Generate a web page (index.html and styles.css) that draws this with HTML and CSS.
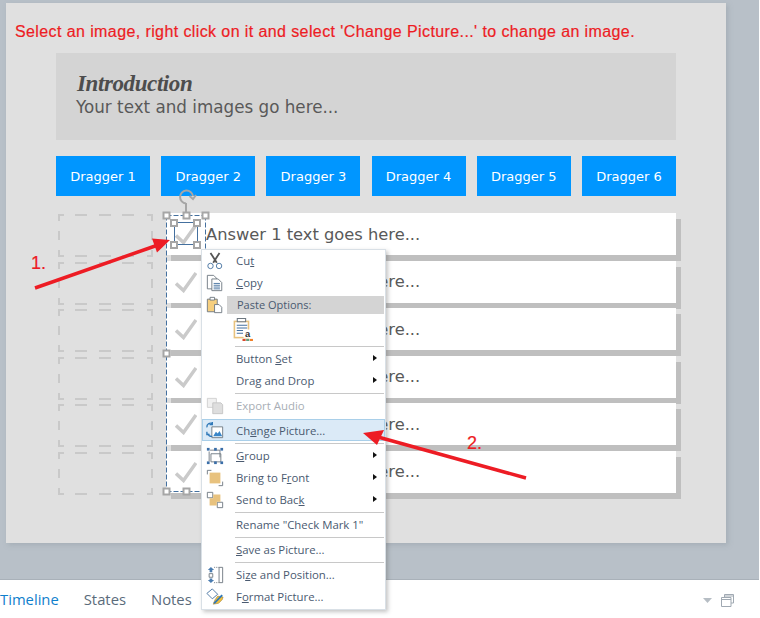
FILE: index.html
```html
<!DOCTYPE html>
<html lang="en">
<head>
<meta charset="utf-8">
<title>Change Picture</title>
<link rel="stylesheet" href="styles.css">
</head>
<body>
<div class="page">
  <main class="stage">
    <section class="slide">
      <p class="note">Select an image, right click on it and select 'Change Picture...' to change an image.</p>
      <header class="intro">
        <h1>Introduction</h1>
        <p>Your text and images go here...</p>
      </header>
      <div class="draggers">
        <div class="dragger">Dragger 1</div>
        <div class="dragger">Dragger 2</div>
        <div class="dragger">Dragger 3</div>
        <div class="dragger">Dragger 4</div>
        <div class="dragger">Dragger 5</div>
        <div class="dragger">Dragger 6</div>
      </div>
      <div class="board">
        <div class="zones">
          <svg class="zone" viewBox="0 0 95 43"><path d="M1 7V1H6M17 1H29M41 1H53M64 1H76M89 1H94V7M94 17V26M94 36V42H89M76 42H64M53 42H41M29 42H17M6 42H1V36M1 26V17"/></svg>
          <svg class="zone" viewBox="0 0 95 43"><path d="M1 7V1H6M17 1H29M41 1H53M64 1H76M89 1H94V7M94 17V26M94 36V42H89M76 42H64M53 42H41M29 42H17M6 42H1V36M1 26V17"/></svg>
          <svg class="zone" viewBox="0 0 95 43"><path d="M1 7V1H6M17 1H29M41 1H53M64 1H76M89 1H94V7M94 17V26M94 36V42H89M76 42H64M53 42H41M29 42H17M6 42H1V36M1 26V17"/></svg>
          <svg class="zone" viewBox="0 0 95 43"><path d="M1 7V1H6M17 1H29M41 1H53M64 1H76M89 1H94V7M94 17V26M94 36V42H89M76 42H64M53 42H41M29 42H17M6 42H1V36M1 26V17"/></svg>
          <svg class="zone" viewBox="0 0 95 43"><path d="M1 7V1H6M17 1H29M41 1H53M64 1H76M89 1H94V7M94 17V26M94 36V42H89M76 42H64M53 42H41M29 42H17M6 42H1V36M1 26V17"/></svg>
          <svg class="zone" viewBox="0 0 95 43"><path d="M1 7V1H6M17 1H29M41 1H53M64 1H76M89 1H94V7M94 17V26M94 36V42H89M76 42H64M53 42H41M29 42H17M6 42H1V36M1 26V17"/></svg>
        </div>
        <div class="answers">
          <div class="answer"><svg class="check" viewBox="0 0 22 22"><path d="M1 12.500l7.500 7L21 2"/></svg><span>Answer 1 text goes here...</span></div>
          <div class="answer"><svg class="check" viewBox="0 0 22 22"><path d="M1 12.500l7.500 7L21 2"/></svg><span>Answer 2 text goes here...</span></div>
          <div class="answer"><svg class="check" viewBox="0 0 22 22"><path d="M1 12.500l7.500 7L21 2"/></svg><span>Answer 3 text goes here...</span></div>
          <div class="answer"><svg class="check" viewBox="0 0 22 22"><path d="M1 12.500l7.500 7L21 2"/></svg><span>Answer 4 text goes here...</span></div>
          <div class="answer"><svg class="check" viewBox="0 0 22 22"><path d="M1 12.500l7.500 7L21 2"/></svg><span>Answer 5 text goes here...</span></div>
          <div class="answer"><svg class="check" viewBox="0 0 22 22"><path d="M1 12.500l7.500 7L21 2"/></svg><span>Answer 6 text goes here...</span></div>
        </div>
      </div>
    </section>
  </main>

  <footer class="timeline">
    <nav class="tabs">
      <span class="tab tab-active">Timeline</span>
      <span class="tab">States</span>
      <span class="tab">Notes</span>
    </nav>
    <div class="tools">
      <svg class="tool-caret" viewBox="0 0 9 5"><path d="M0 0h9L4.500 5z"/></svg>
      <svg class="tool-win" viewBox="0 0 13 13"><path d="M3.500 3V.5h9V9H10"/><path d="M.5 3.500h9.500v9H.5z"/><path d="M.5 5.500h9.500M3.500 2h9"/></svg>
    </div>
  </footer>

  <!-- selection overlay -->
  <svg class="selection" viewBox="0 0 760 618">
    <path class="sel-group" d="M166.500 215.500H205.500M166.500 215.500V491.500M166.500 491.500H205.500M205.500 215.500V250"/>
    <rect class="sel-box" x="174.500" y="222.500" width="23" height="22"/>
    <path class="sel-stem" d="M186 213V203"/>
    <path class="sel-rot" d="M193 196A6.500 6.500 0 1 0 186 203.500"/>
    <path class="sel-rot" d="M189.500 196l3.500 3 3-4"/>
    <g class="handles">
      <rect x="163.500" y="212.500" width="6" height="6"/><rect x="183.500" y="212.500" width="6" height="6"/><rect x="202.500" y="212.500" width="6" height="6"/>
      <rect x="171" y="220" width="6" height="6"/><rect x="194" y="220" width="6" height="6"/>
      <rect x="171" y="242" width="6" height="6"/><rect x="194" y="242" width="6" height="6"/>
      <rect x="163.500" y="350.500" width="6" height="6"/>
      <rect x="163.500" y="488.500" width="6" height="6"/><rect x="183.500" y="488.500" width="6" height="6"/>
    </g>
  </svg>

  <!-- context menu -->
  <div class="menu">
    <div class="item"><svg class="ico" viewBox="0 0 20 20"><path class="i-dark" d="M5 1l7 11M15 1L8 12"/><circle class="i-blue" cx="5" cy="15.500" r="3"/><circle class="i-blue" cx="14.500" cy="15.500" r="3"/></svg><span>Cu<u>t</u></span></div>
    <div class="item"><svg class="ico" viewBox="0 0 20 20"><path class="i-line" d="M1.500 1.500h7l3 3v12h-10z"/><path class="i-fill" d="M6.500 5.500h7l4 4v9h-11z"/><path class="i-blue" d="M8.500 10.500h7M8.500 12.500h7M8.500 14.500h7M8.500 16.500h7"/></svg><span><u>C</u>opy</span></div>
    <div class="item item-head"><svg class="ico" viewBox="0 0 20 20"><path class="i-gold" d="M1.500 3.500h11v14h-11z"/><path class="i-line" d="M4.500 1.500h5v3h-5z"/><path class="i-fill" d="M9.500 9.500h5l3 3v6h-8z"/></svg><span class="head">Paste Options:</span></div>
    <div class="paste"><svg class="paste-ico" viewBox="0 0 20 22"><path class="i-tan" d="M1.500 2.500h15v17h-15z"/><path class="i-paper" d="M3 4h12v14H3z"/><path class="i-line" d="M5 .5h8v3H5z"/><path class="i-blue" d="M4.500 7h10M4.500 9.500h10M4.500 12h6M4.500 14.500h6"/><rect class="i-white" x="11" y="11" width="9" height="8"/><text class="i-a" x="12.500" y="18">a</text><rect class="i-red" x="10" y="20" width="3" height="2"/><rect class="i-green" x="13.500" y="20" width="3" height="2"/><rect class="i-orange" x="17" y="20" width="3" height="2"/></svg></div>
    <hr class="sep">
    <div class="item"><span>Button <u>S</u>et</span><i class="more"></i></div>
    <div class="item"><span>Drag and Drop</span><i class="more"></i></div>
    <hr class="sep">
    <div class="item item-off"><svg class="ico" viewBox="0 0 20 20"><path class="i-pale" d="M1.500 1.500h10v10h-10z"/><path class="i-pale2" d="M7.500 6.500h9l2 2v10h-11z"/></svg><span>Export Audio</span></div>
    <div class="item item-on"><svg class="ico" viewBox="0 0 20 20"><path class="i-line" d="M6.500 6.500h12v12h-12z"/><path class="i-blue2" d="M1 7a4 4 0 0 1 6-4M7 1v3H4M7 17a4 4 0 0 1-5-3M1 12v3h3"/><path class="i-sky" d="M8 17l3-5 2 2 2-3 3 6z"/></svg><span>Ch<u>a</u>nge Picture...</span></div>
    <hr class="sep sep-tight">
    <div class="item"><svg class="ico" viewBox="0 0 20 20"><path class="i-open" d="M4.500 3.500h11v8M3.500 5v11M5.500 7.500h11v9h-11z"/><g class="i-solid"><rect x="1" y="1" width="3" height="3"/><rect x="9" y="1" width="3" height="3"/><rect x="16" y="1" width="3" height="3"/><rect x="1" y="16" width="3" height="3"/><rect x="9" y="16" width="3" height="3"/><rect x="16" y="16" width="3" height="3"/></g></svg><span><u>G</u>roup</span><i class="more"></i></div>
    <div class="item"><svg class="ico" viewBox="0 0 20 20"><path class="i-open" d="M1.500 6V1.500H6M14 18.500h4.500V14"/><rect class="i-tan" x="4" y="4" width="12" height="12"/></svg><span>Bring to F<u>r</u>ont</span><i class="more"></i></div>
    <div class="item"><svg class="ico" viewBox="0 0 20 20"><path class="i-white2" d="M1.500 1.500h6v6h-6zM12.500 12.500h6v6h-6z"/><path class="i-tan" d="M4 8h4V4h8v8h-4v4H4z"/></svg><span>Send to Bac<u>k</u></span><i class="more"></i></div>
    <hr class="sep">
    <div class="item"><span>Rename "Check Mark 1"</span></div>
    <hr class="sep">
    <div class="item"><span><u>S</u>ave as Picture...</span></div>
    <hr class="sep">
    <div class="item"><svg class="ico" viewBox="0 0 20 20"><path class="i-open" d="M14.500 1.500h4v17h-4z"/><path class="i-line" d="M3.500 8.500h4v4h-4z"/><path class="i-dots" d="M9 1.500h5M9 18.500h5"/><path class="i-solid2" d="M5.500 1L9 4.500H7V7H4V4.500H2zM5.500 19L9 15.500H7V14H4v1.500H2z"/></svg><span>Si<u>z</u>e and Position...</span></div>
    <div class="item"><svg class="ico" viewBox="0 0 20 20"><path class="i-paper2" d="M1 6l6-5 6 6-6 5z"/><path class="i-gold2" d="M13 9l6 1-1 3-4 4-6 1 2-5z"/><path class="i-blue3" d="M9 17l9-9"/></svg><span>F<u>o</u>rmat Picture...</span></div>
  </div>

  <!-- annotations -->
  <svg class="arrows" viewBox="0 0 760 618">
    <path class="arrow-line" d="M35 288L158 245"/>
    <path class="arrow-head" d="M170 240L152 238.500L157 252.500z"/>
    <path class="arrow-line" d="M526 478L378 437"/>
    <path class="arrow-head" d="M363 433L384 430L377 445z"/>
  </svg>
  <span class="label label-1">1.</span>
  <span class="label label-2">2.</span>
</div>
</body>
</html>
```
FILE: styles.css
```css
* { box-sizing: border-box; }
html, body { margin: 0; padding: 0; background: #fff; }
.page { position: relative; width: 760px; height: 618px; overflow: hidden; }
.stage { width: 759px; height: 580px; padding: 3px 0 0 6px; background: #b8c0c8; border-bottom: 1px solid #a9b1b9; }
.slide { width: 720px; height: 540px; background: #e0e0e0; box-shadow: 2px 2px 5px rgba(130,140,150,.35); padding-top: 20px; }
.note { margin: 0 0 0 9px; font: 16px/18px "Liberation Sans", Arial, sans-serif; color: #ed1c24; -webkit-text-stroke: .2px #ed1c24; white-space: nowrap; letter-spacing: .4px; }
.intro { margin: 12px 50px 0; height: 87px; background: #d4d4d4; padding: 18px 0 0 21px; }
.intro h1 { margin: 0; font: italic bold 23px/25px "Liberation Serif", serif; letter-spacing: -.4px; color: #4d4d4d; }
.intro p { margin: 1px 0 0 -1px; font: 16.750px/20px "DejaVu Sans", Verdana, sans-serif; color: #595959; }
.draggers { display: flex; justify-content: space-between; margin: 16px 50px 0; }
.dragger { width: 94px; height: 40px; background: #0096ff; color: #fff; display: flex; align-items: center; justify-content: center; font: 13px "DejaVu Sans", Verdana, sans-serif; }
.board { display: flex; margin: 17px 0 0 52px; }
.zones { width: 108px; padding-top: 1px; display: flex; flex-direction: column; gap: 4.500px; }
.zone { width: 95px; height: 43px; display: block; }
.zone path { fill: none; stroke: #c9c9c9; stroke-width: 2; }
.answers { width: 510px; display: flex; flex-direction: column; gap: 5.500px; }
.answer { height: 42px; background: #fff; box-shadow: 5px 6px 0 #bfbfbf; display: flex; align-items: center; padding-left: 9px; font: 16.300px "DejaVu Sans", Verdana, sans-serif; color: #595959; }
.check { width: 22px; height: 22px; margin-right: 9px; flex: none; }
.check path { fill: none; stroke: #cacaca; stroke-width: 3.500; }

.timeline { height: 38px; width: 759px; background: #fff; display: flex; justify-content: space-between; align-items: center; padding: 0 25px 0 0; }
.tabs { display: flex; gap: 25px; font: 14.800px "Open Sans", "Noto Sans", sans-serif; color: #5b6b7b; }
.tab-active { color: #0f80cc; }
.tools { display: flex; align-items: center; gap: 9px; padding-top: 2px; }
.tool-caret { width: 9px; height: 5px; fill: #b6bdc4; }
.tool-win { width: 13px; height: 13px; fill: none; stroke: #a0a9b2; }

.selection, .arrows { position: absolute; left: 0; top: 0; width: 760px; height: 618px; pointer-events: none; }
.sel-group { fill: none; stroke: #44709f; stroke-dasharray: 5 2; }
.sel-box { fill: none; stroke: #44709f; }
.sel-stem { stroke: #a6a6a6; stroke-width: 2; }
.sel-rot { fill: none; stroke: #a6a6a6; stroke-width: 2; }
.handles rect { fill: #fff; stroke: #a6a6a6; stroke-width: 2; }

.menu { position: absolute; left: 201px; top: 249px; width: 185px; height: 361px; background: #fff; border: 1px solid #d9e0e6; box-shadow: 2px 2px 4px rgba(90,90,90,.35); font: 11.400px "Open Sans", "Noto Sans", sans-serif; color: #4a5a70; }
.item { position: relative; height: 22px; display: flex; align-items: center; padding: 0 0 2px 34px; white-space: nowrap; }
.item u { text-decoration-thickness: 1px; }
.ico { position: absolute; left: 4px; top: 2px; width: 18px; height: 18px; overflow: visible; }
.item-head { padding-bottom: 0; }
.item-head .head { flex: 1; margin: 2px 1px 2px -9px; padding-left: 10px; background: #d4d4d4; height: 18px; line-height: 17px; font-size: 11px; }
.paste { height: 29px; padding: 2px 0 0 30px; }
.paste-ico { display: block; width: 21px; height: 23px; overflow: visible; }
.sep { margin: 1px 1px 1px 33px; border: 0; border-top: 1px solid #c8c8c8; height: 1px; }
.sep-tight { margin-top: 2px; margin-bottom: 1px; }
.more { position: absolute; right: 8px; top: 7px; width: 0; height: 0; border-left: 4px solid #111; border-top: 3.500px solid transparent; border-bottom: 3.500px solid transparent; }
.item-off { color: #a8aeb5; margin-top: 1px; }
.item-on { background: #dbeaf7; box-shadow: inset 0 0 0 1px #a9cfe9; margin-top: 2px; padding-bottom: 0; }
.i-dark { fill: none; stroke: #555; stroke-width: 2; }
.i-blue { fill: none; stroke: #44709f; stroke-width: 1; }
.i-line { fill: #fff; stroke: #6d7780; stroke-width: 1; }
.i-open { fill: none; stroke: #6d7780; stroke-width: 1; }
.i-dots { fill: none; stroke: #6d7780; stroke-dasharray: 1 1; }
.i-fill { fill: #fff; stroke: #6d7780; stroke-width: 1; }
.i-gold { fill: #f6cf7f; stroke: #6d7780; }
.i-tan { fill: #e8c27e; }
.i-paper { fill: #fff; }
.i-white { fill: #fff; }
.i-a { font: bold 9px "Liberation Sans", sans-serif; fill: #333; }
.i-red { fill: #d9472b; }
.i-green { fill: #5f9e7d; }
.i-orange { fill: #f07f27; }
.i-pale { fill: #f0f0f0; stroke: #cfcfcf; }
.i-pale2 { fill: #dedede; stroke: #c4c4c4; }
.i-blue2 { fill: none; stroke: #2f78b8; stroke-width: 1.500; }
.i-sky { fill: #3a86c8; }
.i-solid rect { fill: #3a6ea8; }
.i-white2 { fill: #fff; stroke: #6d7780; }
.i-solid2 { fill: #4a7cb0; }
.i-paper2 { fill: #fff; stroke: #44709f; }
.i-gold2 { fill: #f0c040; stroke: #8a6a20; stroke-width: .5; }
.i-blue3 { fill: none; stroke: #2f78b8; stroke-width: 2; }

.arrow-line { fill: none; stroke: #ed1c24; stroke-width: 3.500; }
.arrow-head { fill: #ed1c24; }
.label { position: absolute; font: 18px/20px "Liberation Sans", Arial, sans-serif; color: #ed1c24; -webkit-text-stroke: .2px #ed1c24; }
.label-1 { left: 31px; top: 253px; }
.label-2 { left: 467px; top: 433px; }
```
